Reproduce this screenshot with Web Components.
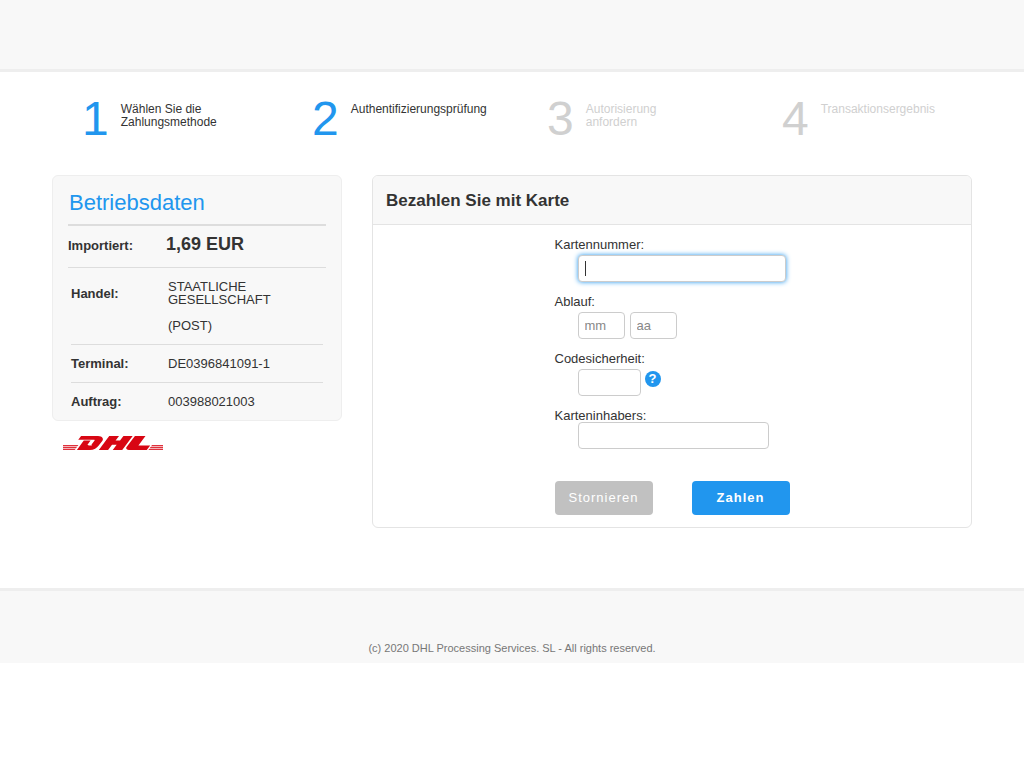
<!DOCTYPE html>
<html lang="de">
<head>
<meta charset="utf-8">
<meta name="viewport" content="width=device-width, initial-scale=1">
<title>Bezahlen Sie mit Karte</title>
<style>
  body {
    margin: 0;
    background: #fff;
    color: #333;
    font: 13px/13px "Liberation Sans", Arial, sans-serif;
    --blue: #2196ee;
    --panel: #f8f8f8;
    --edge: #eee;
    --rule: #ddd;
  }
</style>
</head>
<body>
<payment-page></payment-page>
<script>
const define = (name, html, setup) => {
  const template = document.createElement('template');
  template.innerHTML = html;
  customElements.define(name, class extends HTMLElement {
    constructor() {
      super();
      this.attachShadow({ mode: 'open' }).append(template.content.cloneNode(true));
    }
    connectedCallback() { if (setup) setup(this.shadowRoot); }
  });
};

define('step-item', `
  <style>
    :host { display: flex; gap: 12px; color: #333; font-size: 12px; --number: var(--blue); }
    :host([pending]) { color: #d0d0d0; --number: #d0d0d0; }
    .number { font-size: 48px; line-height: 48px; color: var(--number); }
    .label { padding-top: 8px; max-width: 140px; }
  </style>
  <div class="number"><slot name="number"></slot></div>
  <div class="label"><slot></slot></div>`);

define('step-list', `
  <style>
    :host { display: grid; grid-template-columns: 230fr 235fr 235fr 190fr; padding: 23px 0 32px 30px; }
  </style>
  <step-item><span slot="number">1</span>Wählen Sie die<br>Zahlungsmethode</step-item>
  <step-item><span slot="number">2</span>Authentifizierungsprüfung</step-item>
  <step-item pending><span slot="number">3</span>Autorisierung<br>anfordern</step-item>
  <step-item pending><span slot="number">4</span>Transaktionsergebnis</step-item>`);

define('dhl-logo', `
  <style>
    :host { display: block; }
    svg { display: block; width: 100px; height: 14px; fill: #d80613; }
  </style>
  <svg viewBox="0 8.2 175.7 24.6" preserveAspectRatio="none" role="img" aria-label="DHL">
    <path opacity=".3" d="M0 24h27l-6.4 8.8H0zM156.5 24h19.2v8.8h-25.6z"/>
    <path opacity=".75" d="M0 24h27l-1.4 1.9H0zM0 27.5h24.4L23 29.4H0zM0 31h21.9l-1.3 1.8H0z"/>
    <path opacity=".75" d="M156.5 24h19.2v1.9h-20.6zM154 27.5h21.7v1.9h-23.1zM151.4 31h24.3v1.8h-25.6z"/>
    <path d="M31.8 8.2l-5 6.4h27.3c2 0 2 1 .7 2.5l-4.2 5.4c-.7.9-1 2 .9 2l-1 .4h-5l-2.5-1.5 5.5-7.1H36.5L24.4 32.8H47c7.5 0 12.6-4 15.4-7.5l6.9-8.6c2.3-3.1.2-8.5-7.8-8.5z"/>
    <path d="M81.2 8.2h17.2l-6 8.1h7.8l6-8.1h16.2l-18.3 24.6H87.4l6.9-9.2h-8.2l-6.9 9.2H62.9z"/>
    <path d="M126.4 8.2h18.5l-12.4 16.6h20.7l-6 8h-29.2c-6.5 0-8.1-2.9-6.3-5.3z"/>
  </svg>`);

define('merchant-summary', `
  <style>
    :host { display: block; background: var(--panel); border: 1px solid var(--edge); border-radius: 6px; padding: 0 15px; }
    h2 { margin: 0; padding: 14px 1px 9px; border-bottom: 2px solid var(--rule); color: var(--blue); font-size: 22px; line-height: 25px; font-weight: 400; }
    dl { display: flex; align-items: baseline; margin: 0; padding: 8px 0 11px; border-bottom: 1px solid var(--rule); font-weight: 700; line-height: 22px; }
    dt { flex: 0 0 98px; }
    dd { margin: 0; font-size: 18px; line-height: 20px; }
    dt { line-height: 20px; }
    .details { padding: 0 3px; }
    table { width: 100%; border-collapse: collapse; }
    th, td { padding: 12px 0; text-align: left; vertical-align: top; }
    th { width: 97px; }
    .merchant th { padding-top: 19px; }
    tr + tr { border-top: 1px solid var(--rule); }
    p { margin: 0; }
    p + p { margin-top: 13px; }
  </style>
  <h2>Betriebsdaten</h2>
  <dl><dt>Importiert:</dt><dd>1,69 EUR</dd></dl>
  <div class="details">
    <table>
      <tr class="merchant"><th scope="row">Handel:</th><td><p>STAATLICHE<br>GESELLSCHAFT</p><p>(POST)</p></td></tr>
      <tr><th scope="row">Terminal:</th><td>DE0396841091-1</td></tr>
      <tr><th scope="row">Auftrag:</th><td>003988021003</td></tr>
    </table>
  </div>`);

define('card-form', `
  <style>
    :host { display: block; border: 1px solid #e4e4e4; border-radius: 6px; overflow: hidden; }
    h1 { margin: 0; padding: 15px 13px 13px; background: var(--panel); border-bottom: 1px solid #e4e4e4; font-size: 17px; line-height: 20px; }
    form { width: 235px; margin: 0 auto; padding: 13px 0 12px; }
    .field { margin-bottom: 13px; }
    label { display: block; }
    .inputs { display: flex; align-items: flex-start; gap: 5px; padding: 4px 0 0 23px; }
    .holder .inputs { padding-top: 0; }
    input { box-sizing: border-box; height: 27px; margin: 0; padding: 0 6px; border: 1px solid #ccc; border-radius: 4px; background: #fff; color: #333; font: inherit; outline: 0; }
    input::placeholder { color: #888; }
    input:focus { box-shadow: 0 0 5px var(--blue); }
    /* steady caret while the focused card number is empty */
    .long:focus:placeholder-shown { caret-color: transparent; background: linear-gradient(#333, #333) 6px center / 1px 15px no-repeat #fff; }
    .long { width: 208px; }
    .short { width: 47px; }
    .code { width: 63px; }
    .medium { width: 191px; }
    button { border: 0; padding: 0; color: #fff; font: inherit; cursor: pointer; }
    .help { width: 16px; height: 16px; margin-top: 2px; border-radius: 50%; background: var(--blue); font-weight: 700; line-height: 16px; }
    .security .inputs { gap: 4px; }
    .actions { display: flex; justify-content: space-between; padding-top: 19px; }
    .actions button { width: 98px; height: 34px; padding-bottom: 2px; border-radius: 4px; background: #c1c1c1; letter-spacing: 1px; }
    .actions .pay { background: var(--blue); font-weight: 700; }
  </style>
  <h1>Bezahlen Sie mit Karte</h1>
  <form>
    <div class="field"><label for="number">Kartennummer:</label><div class="inputs"><input id="number" class="long" type="text" placeholder=" "></div></div>
    <div class="field"><label for="month">Ablauf:</label><div class="inputs"><input id="month" class="short" type="text" placeholder="mm"><input class="short" type="text" placeholder="aa" aria-label="Ablaufjahr"></div></div>
    <div class="field security"><label for="code">Codesicherheit:</label><div class="inputs"><input id="code" class="code" type="text"><button class="help" type="button">?</button></div></div>
    <div class="field holder"><label for="holder">Karteninhabers:</label><div class="inputs"><input id="holder" class="medium" type="text"></div></div>
    <div class="actions"><button type="button">Stornieren</button><button class="pay" type="button">Zahlen</button></div>
  </form>`, root => root.getElementById('number').focus());

define('payment-page', `
  <style>
    :host { display: block; }
    header { height: 69px; background: var(--panel); border-bottom: 3px solid var(--edge); }
    main { max-width: 920px; margin: 0 auto; padding: 0 24px 60px; }
    .columns { display: grid; grid-template-columns: 290fr 600fr; gap: 30px; align-items: start; }
    dhl-logo { padding: 15px 11px 0; }
    footer { background: var(--panel); border-top: 3px solid var(--edge); padding: 51px 0 8px; text-align: center; color: #777; font-size: 11px; }
  </style>
  <header></header>
  <main>
    <step-list></step-list>
    <div class="columns">
      <aside><merchant-summary></merchant-summary><dhl-logo></dhl-logo></aside>
      <card-form></card-form>
    </div>
  </main>
  <footer>(c) 2020 DHL Processing Services. SL - All rights reserved.</footer>`);
</script>
</body>
</html>
